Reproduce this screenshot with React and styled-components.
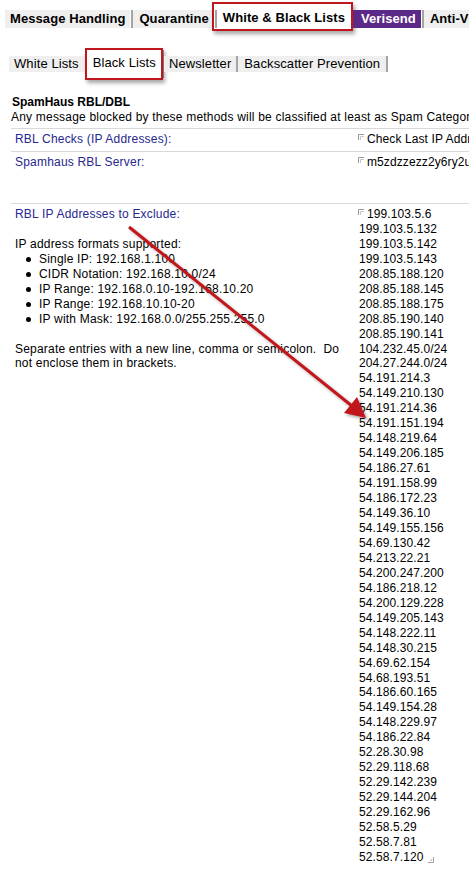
import styled, { createGlobalStyle, css } from 'styled-components';

/* page-wide reset */
const GlobalStyle = createGlobalStyle`
  html, body {
    margin: 0;
    padding: 0;
    background: #ffffff;
    overflow: hidden;
  }
  body {
    font-family: "Liberation Sans", Arial, sans-serif;
    color: #000000;
  }
`;

const LINE = '14.96px';
const RED = '#c0161c';

const Page = styled.div`
  position: relative;
  width: 469px;
  height: 869px;
  overflow: hidden;
`;

/* little red annotation frame drawn over the selected tabs */
const annotated = css`
  &::after {
    content: "";
    position: absolute;
    border: 2px solid ${RED};
    box-shadow: 2px 3px 4px rgba(0, 0, 0, 0.35);
    pointer-events: none;
  }
`;

const MainTabs = styled.nav`
  display: flex;
  align-items: flex-end;
  margin-top: 4px;
  padding-left: 5px;
  white-space: nowrap;
`;

const MainTab = styled.span`
  position: relative;
  height: 18px;
  line-height: 18px;
  padding: 0 6px 0 ${({ $first }) => ($first ? 5 : 6)}px;
  font-size: 13px;
  font-weight: bold;
  letter-spacing: 0.08px;
  background: ${({ $purple }) => ($purple ? '#5b2a88' : '#efefef')};
  color: ${({ $purple }) => ($purple ? '#ffffff' : '#000000')};
  border-right: 2px solid #a4a4a4;
  box-shadow: inset -1px 0 0 #ffffff;

  ${({ $active }) =>
    $active &&
    css`
      height: 24px;
      line-height: 18px;
      padding-top: 5px;
      padding-bottom: 1px;
      box-sizing: border-box;
      background: #ffffff;
      ${annotated}
      &::after {
        left: -5px;
        right: -2px;
        top: -2px;
        bottom: -3px;
      }
    `}
`;

const SubTabs = styled.nav`
  display: flex;
  align-items: center;
  margin-top: 22px;
  padding-left: 9px;
  white-space: nowrap;
`;

const SubTab = styled.span`
  position: relative;
  height: 16px;
  line-height: 16px;
  padding: 0 5px;
  font-size: 13px;
  letter-spacing: 0.1px;
  background: #efefef;
  border-right: 2px solid ${({ $noSep }) => ($noSep ? '#efefef' : '#a4a4a4')};

  ${({ $active }) =>
    $active &&
    css`
      height: 28px;
      line-height: 26px;
      padding: 0 6px 0 7px;
      background: #ffffff;
      ${annotated}
      &::after {
        left: -1px;
        right: -1px;
        top: -2px;
        bottom: -2px;
      }
    `}
`;

const Section = styled.section`
  margin: 17px 0 0 11px;
  font-size: 12px;
  line-height: 15px;
  letter-spacing: 0.2px;
  white-space: nowrap;
`;

const Heading = styled.div`
  font-weight: bold;
  padding-left: 1px;
  letter-spacing: 0;
`;

const Intro = styled.div`
  margin-bottom: 3px;
`;

const Row = styled.div`
  display: grid;
  grid-template-columns: 343px 1fr;
  border-top: 1px solid #d9d9d9;
  padding: 3px 0 4px;
  min-height: ${({ $tall }) => ($tall ? '44px' : 'auto')};
  box-sizing: content-box;
  line-height: ${LINE};
`;

const LabelCell = styled.div`
  padding: 0 10px 0 4px;
  white-space: normal;
`;

const Label = styled.div`
  color: #27278f;
`;

const Blank = styled.div`
  height: ${LINE};
`;

const Formats = styled.ul`
  margin: 0;
  padding: 0 0 0 11px;
  list-style: none;

  li {
    display: flex;
    align-items: center;
  }
  li::before {
    content: "";
    width: 5px;
    height: 5px;
    border-radius: 50%;
    background: #000000;
    margin-right: 8px;
    flex: none;
  }
`;

const ValueCell = styled.div`
  padding-left: 4px;
  white-space: nowrap;
  overflow: hidden;
  letter-spacing: 0.1px;
`;

const ValueLine = styled.div`
  display: flex;
  align-items: flex-start;
  padding-left: ${({ $indent }) => ($indent ? 1 : 0)}px;
`;

const Corner = styled.svg`
  flex: none;
  width: 6px;
  height: 6px;
  margin: 2px 3px 0 0;
`;

const Grip = styled.svg`
  width: 6px;
  height: 6px;
  margin: 7px 0 0 4px;
`;

const BottomRule = styled.div`
  height: 2px;
  background: #000000;
  margin-top: 1px;
`;

const Overlay = styled.svg`
  position: absolute;
  left: 0;
  top: 0;
  pointer-events: none;
`;

const excluded = [
  '199.103.5.6', '199.103.5.132', '199.103.5.142', '199.103.5.143',
  '208.85.188.120', '208.85.188.145', '208.85.188.175', '208.85.190.140',
  '208.85.190.141', '104.232.45.0/24', '204.27.244.0/24', '54.191.214.3',
  '54.149.210.130', '54.191.214.36', '54.191.151.194', '54.148.219.64',
  '54.149.206.185', '54.186.27.61', '54.191.158.99', '54.186.172.23',
  '54.149.36.10', '54.149.155.156', '54.69.130.42', '54.213.22.21',
  '54.200.247.200', '54.186.218.12', '54.200.129.228', '54.149.205.143',
  '54.148.222.11', '54.148.30.215', '54.69.62.154', '54.68.193.51',
  '54.186.60.165', '54.149.154.28', '54.148.229.97', '54.186.22.84',
  '52.28.30.98', '52.29.118.68', '52.29.142.239', '52.29.144.204',
  '52.29.162.96', '52.58.5.29', '52.58.7.81', '52.58.7.120',
];

function CornerMark() {
  return (
    <Corner viewBox="0 0 6 6">
      <path d="M0.5 6V0.5H6" fill="none" stroke="#9a9a9a" />
      <path d="M2.5 6V2.5H6" fill="none" stroke="#c8c8c8" />
    </Corner>
  );
}

export default function App() {
  return (
    <Page>
      <GlobalStyle />

      <MainTabs>
        <MainTab $first>Message Handling</MainTab>
        <MainTab>Quarantine</MainTab>
        <MainTab $active>White &amp; Black Lists</MainTab>
        <MainTab $purple style={{ paddingLeft: 8 }}>Verisend</MainTab>
        <MainTab>Anti-Virus</MainTab>
      </MainTabs>

      <SubTabs>
        <SubTab $noSep>White Lists</SubTab>
        <SubTab $active>Black Lists</SubTab>
        <SubTab>Newsletter</SubTab>
        <SubTab style={{ padding: '0 6px' }}>Backscatter Prevention</SubTab>
      </SubTabs>

      <Section>
        <Heading>SpamHaus RBL/DBL</Heading>
        <Intro>Any message blocked by these methods will be classified at least as Spam Category 1.</Intro>

        <Row>
          <LabelCell>
            <Label>RBL Checks (IP Addresses):</Label>
          </LabelCell>
          <ValueCell>
            <ValueLine><CornerMark />Check Last IP Address Only</ValueLine>
          </ValueCell>
        </Row>

        <Row $tall>
          <LabelCell>
            <Label>Spamhaus RBL Server:</Label>
          </LabelCell>
          <ValueCell>
            <ValueLine><CornerMark />m5zdzzezz2y6ry2utsbk3ltzfe.zen.dq.spamhaus.net</ValueLine>
          </ValueCell>
        </Row>

        <Row>
          <LabelCell>
            <Label>RBL IP Addresses to Exclude:</Label>
            <Blank />
            <div>IP address formats supported:</div>
            <Formats>
              <li>Single IP: 192.168.1.100</li>
              <li>CIDR Notation: 192.168.10.0/24</li>
              <li>IP Range: 192.168.0.10-192.168.10.20</li>
              <li>IP Range: 192.168.10.10-20</li>
              <li>IP with Mask: 192.168.0.0/255.255.255.0</li>
            </Formats>
            <Blank />
            <div>Separate entries with a new line, comma or semicolon.&nbsp; Do not enclose them in brackets.</div>
          </LabelCell>
          <ValueCell>
            {excluded.map((ip, i) => (
              <ValueLine key={ip} $indent={i > 0}>
                {i === 0 && <CornerMark />}
                {ip}
                {i === excluded.length - 1 && (
                  <Grip viewBox="0 0 6 6">
                    <path d="M0 5.5H5.5V0" fill="none" stroke="#a0a0a0" />
                    <path d="M2 3.5H3.5V2" fill="none" stroke="#c8c8c8" />
                  </Grip>
                )}
              </ValueLine>
            ))}
          </ValueCell>
        </Row>
      </Section>

      <BottomRule />

      <Overlay width="469" height="869" viewBox="0 0 469 869">
        <defs>
          <filter id="arrowShadow" x="-10%" y="-10%" width="130%" height="130%">
            <feDropShadow dx="2" dy="2" stdDeviation="1.5" floodColor="#000" floodOpacity="0.35" />
          </filter>
        </defs>
        <g filter="url(#arrowShadow)" fill={RED} stroke={RED}>
          <line x1="129" y1="227" x2="352" y2="406" strokeWidth="3" />
          <polygon points="366,418 344,413 357,397" stroke="none" />
        </g>
      </Overlay>
    </Page>
  );
}
